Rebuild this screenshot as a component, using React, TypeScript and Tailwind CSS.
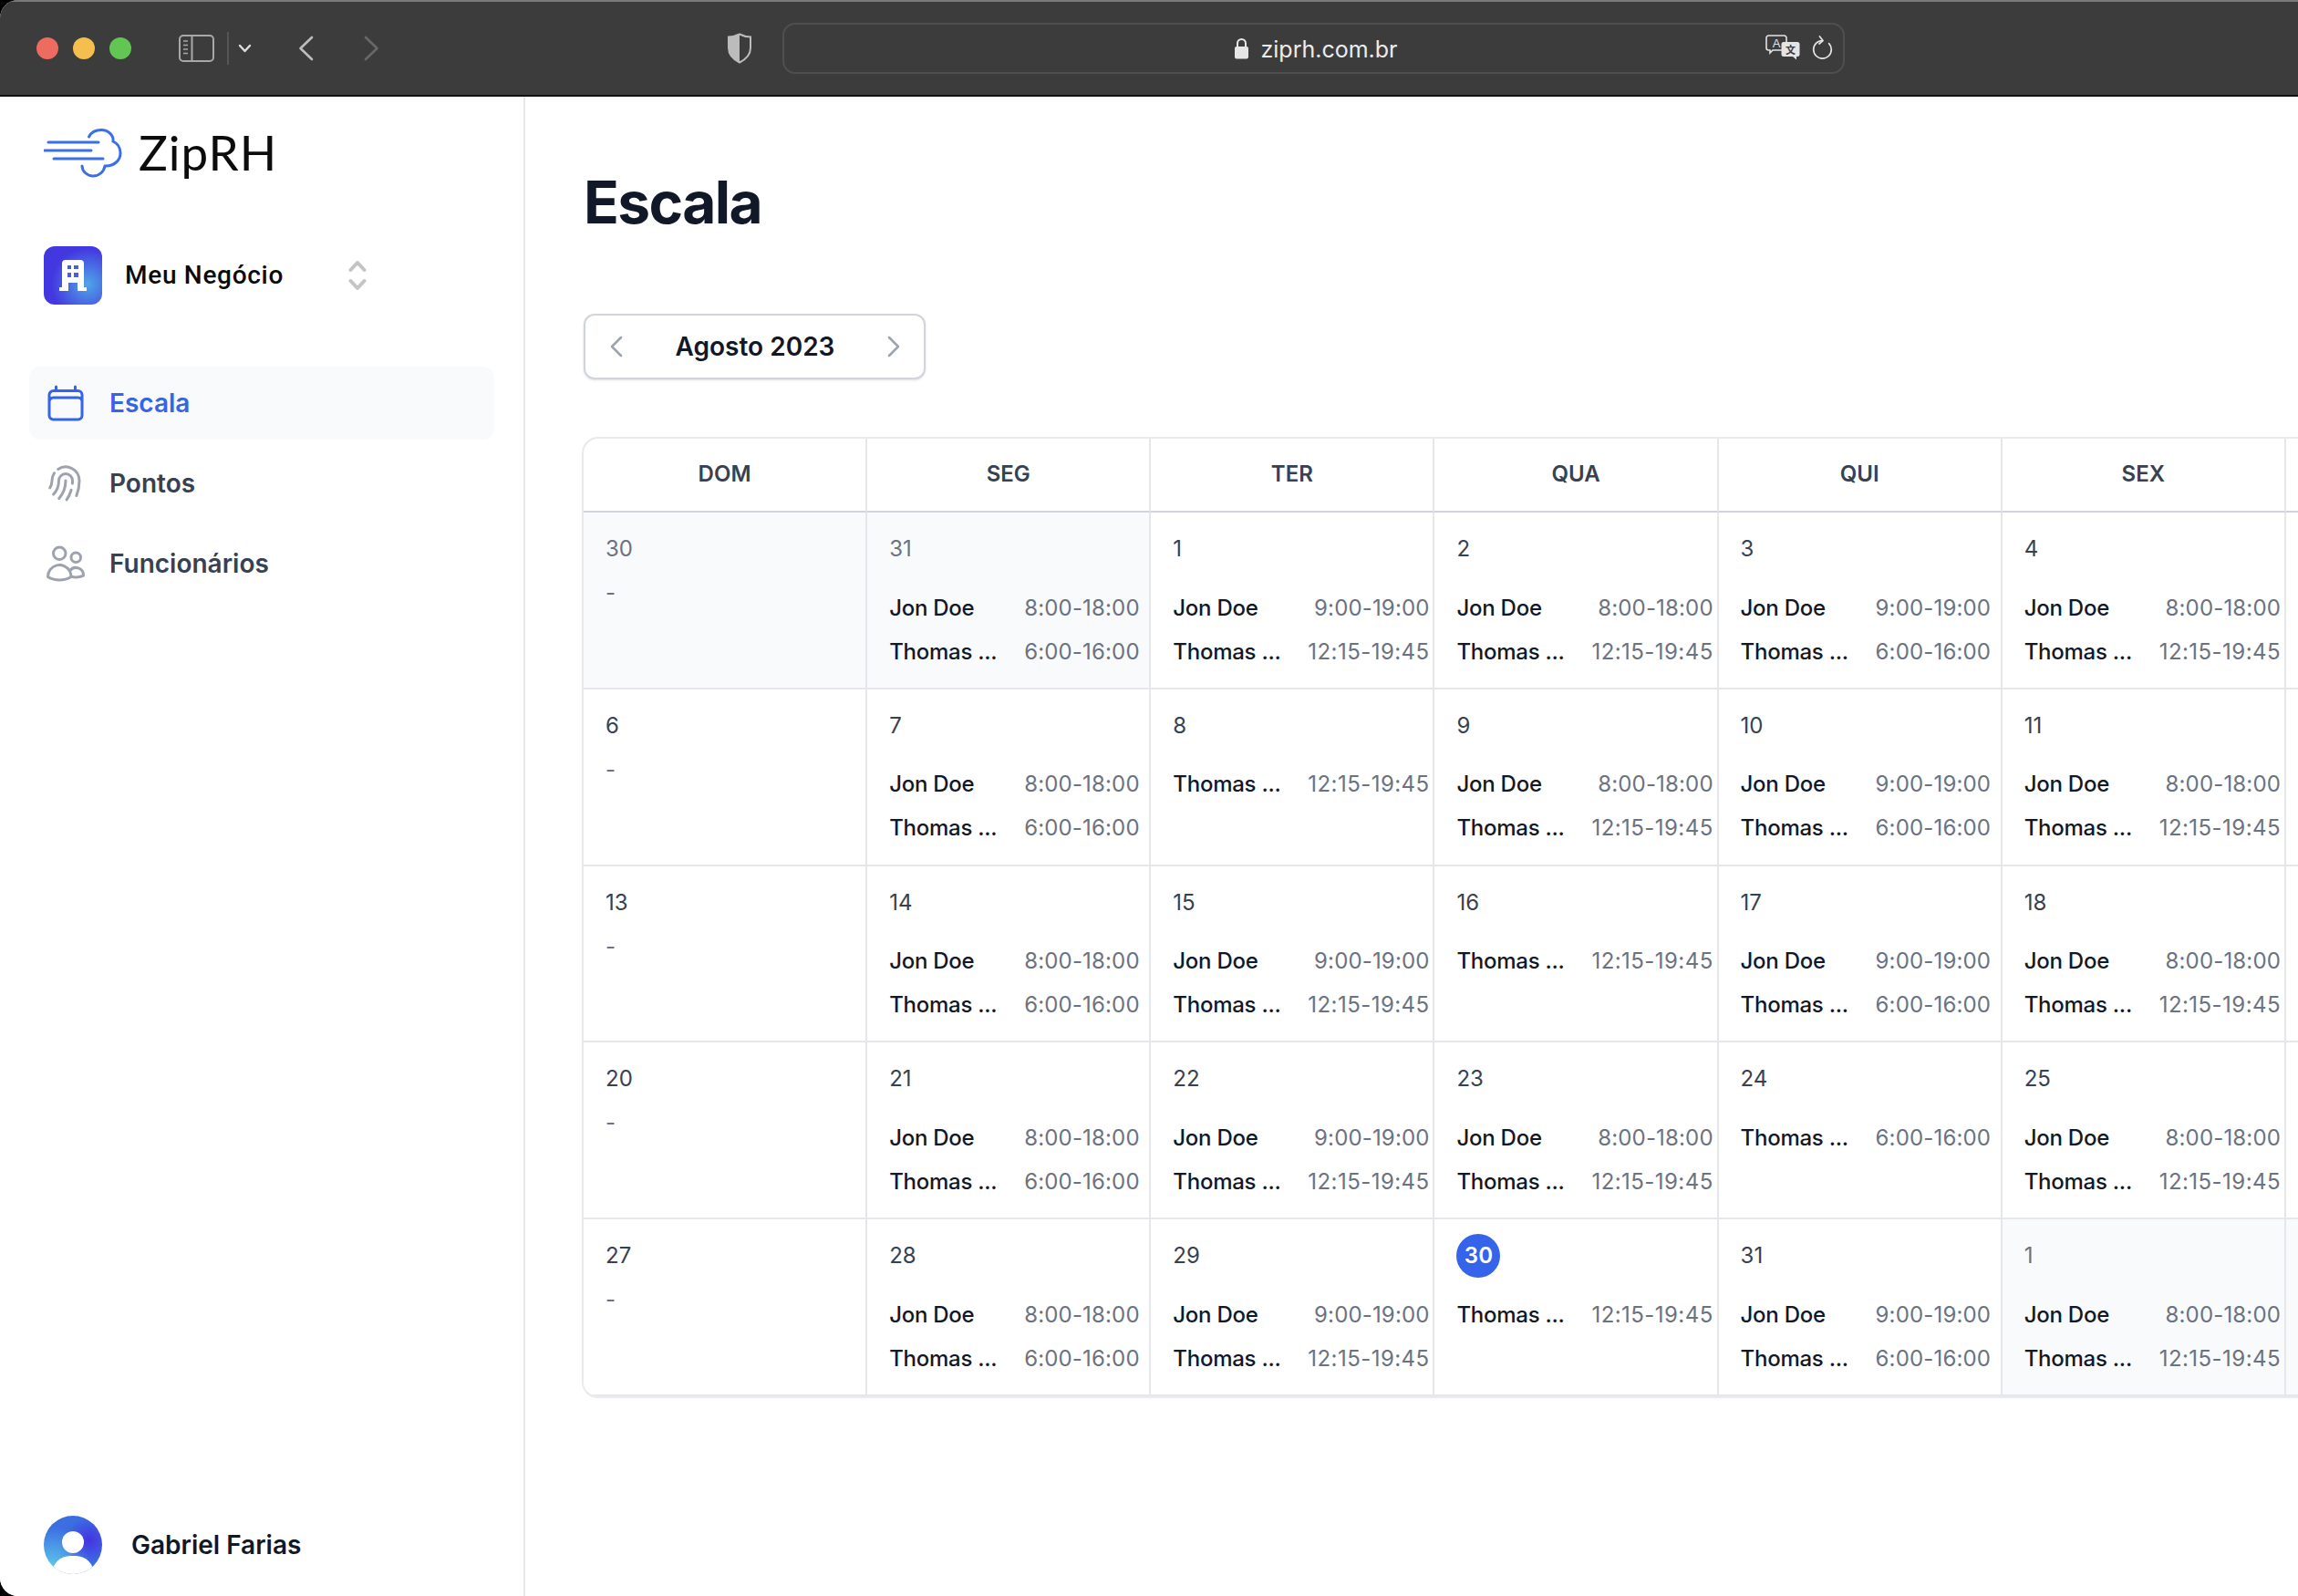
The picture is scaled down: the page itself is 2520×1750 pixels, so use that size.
import React from "react";

type Shift = { name: string; time: string };
type Day = { label: string; outside?: boolean; today?: boolean; shifts?: Shift[]; blank?: boolean };

const J8 = { name: "Jon Doe", time: "8:00-18:00" };
const J9 = { name: "Jon Doe", time: "9:00-19:00" };
const T6 = { name: "Thomas ...", time: "6:00-16:00" };
const T12 = { name: "Thomas ...", time: "12:15-19:45" };

const headers = ["DOM", "SEG", "TER", "QUA", "QUI", "SEX", ""];

const weeks: Day[][] = [
  [
    { label: "30", outside: true },
    { label: "31", outside: true, shifts: [J8, T6] },
    { label: "1", shifts: [J9, T12] },
    { label: "2", shifts: [J8, T12] },
    { label: "3", shifts: [J9, T6] },
    { label: "4", shifts: [J8, T12] },
    { label: "", blank: true },
  ],
  [
    { label: "6" },
    { label: "7", shifts: [J8, T6] },
    { label: "8", shifts: [T12] },
    { label: "9", shifts: [J8, T12] },
    { label: "10", shifts: [J9, T6] },
    { label: "11", shifts: [J8, T12] },
    { label: "", blank: true },
  ],
  [
    { label: "13" },
    { label: "14", shifts: [J8, T6] },
    { label: "15", shifts: [J9, T12] },
    { label: "16", shifts: [T12] },
    { label: "17", shifts: [J9, T6] },
    { label: "18", shifts: [J8, T12] },
    { label: "", blank: true },
  ],
  [
    { label: "20" },
    { label: "21", shifts: [J8, T6] },
    { label: "22", shifts: [J9, T12] },
    { label: "23", shifts: [J8, T12] },
    { label: "24", shifts: [T6] },
    { label: "25", shifts: [J8, T12] },
    { label: "", blank: true },
  ],
  [
    { label: "27" },
    { label: "28", shifts: [J8, T6] },
    { label: "29", shifts: [J9, T12] },
    { label: "30", today: true, shifts: [T12] },
    { label: "31", shifts: [J9, T6] },
    { label: "1", outside: true, shifts: [J8, T12] },
    { label: "", blank: true, outside: true },
  ],
];

function BrowserBar() {
  return (
    <div className="flex h-[106px] shrink-0 items-center border-t-2 border-b-2 border-t-[#7a7a7a] border-b-[#111111] bg-[#3c3c3c] pl-10">
      {/* Traffic lights */}
      <div className="flex gap-4">
        <div className="h-6 w-6 rounded-full bg-[#ee6b60]" />
        <div className="h-6 w-6 rounded-full bg-[#f5bf4f]" />
        <div className="h-6 w-6 rounded-full bg-[#62c554]" />
      </div>

      {/* Sidebar toggle */}
      <svg className="ml-[52px] h-[30px] w-[39px]" viewBox="0 0 39 30" fill="none" stroke="#a8a8a8" strokeWidth="2">
        <rect x="1" y="1" width="37" height="28" rx="4" />
        <path d="M14.5 1v28" />
        <path d="M5 7h5M5 11.5h5M5 16h5M5 20.5h5" strokeWidth="1.6" />
      </svg>
      <div className="ml-[14px] h-9 w-[2px] bg-[#555555]" />
      <svg className="ml-[10px] h-[10px] w-[15px]" viewBox="0 0 15 10" fill="none" stroke="#dddddd" strokeWidth="2.4" strokeLinecap="round" strokeLinejoin="round">
        <path d="M2 2l5.5 6L13 2" />
      </svg>

      {/* Back / forward */}
      <svg className="ml-[51px] h-[28px] w-[17px]" viewBox="0 0 17 28" fill="none" stroke="#bdbdbd" strokeWidth="2.6" strokeLinecap="round" strokeLinejoin="round">
        <path d="M15 2L2.5 14 15 26" />
      </svg>
      <svg className="ml-[55px] h-[28px] w-[17px]" viewBox="0 0 17 28" fill="none" stroke="#686868" strokeWidth="2.6" strokeLinecap="round" strokeLinejoin="round">
        <path d="M2 2l12.5 12L2 26" />
      </svg>

      {/* Shield */}
      <svg className="ml-[381px] h-[34px] w-[28px]" viewBox="0 0 28 34" fill="none">
        <path d="M14 1.5C10 3.5 6 4.5 2 4.5v12c0 7 5 12.500 12 16 7-3.500 12-9 12-16v-12c-4 0-8-1-12-3z" stroke="#bcbcbc" strokeWidth="2" />
        <path d="M14 1.500C10 3.500 6 4.500 2 4.500v12c0 7 5 12.500 12 16z" fill="#bcbcbc" />
      </svg>

      {/* Address bar */}
      <div className="relative ml-[33px] flex h-[56px] w-[1165px] items-center justify-center rounded-[14px] border-2 border-[#4f4f4f]">
        <div className="ml-[5px] mr-[12px] flex items-center">
          <svg className="h-[24px] w-[17px]" viewBox="0 0 17 24" fill="none">
            <path d="M4 11V6.500a4.500 4.500 0 019 0V11" stroke="#e6e6e6" strokeWidth="2" />
            <rect x="1" y="10" width="15" height="13.500" rx="2" fill="#e6e6e6" />
          </svg>
        </div>
        <span className="pt-[2px] font-['Inter',sans-serif] text-[25px] leading-none text-[#ececec]">ziprh.com.br</span>

        {/* Translate + reload */}
        <div className="absolute right-[11px] top-[11px] flex items-center gap-[13px]">
          <svg className="h-[28px] w-[38px]" viewBox="0 0 38 28" fill="none">
            <path d="M3.500 1h17a2.500 2.500 0 012.500 2.500v11a2.500 2.500 0 01-2.500 2.500H8l-3 3v-3H3.500A2.500 2.500 0 011 14.500v-11A2.500 2.500 0 013.500 1z" stroke="#e4e4e4" strokeWidth="1.6" />
            <text x="12" y="14" textAnchor="middle" fontSize="13" fontFamily="'Liberation Sans',sans-serif" fill="#e4e4e4">A</text>
            <path d="M20 8h15a2.500 2.500 0 012.500 2.500v11a2.500 2.500 0 01-2.500 2.500h-1v3.500L30 24H20a2.500 2.500 0 01-2.500-2.500v-11A2.500 2.500 0 0120 8z" fill="#e4e4e4" />
            <text x="27.500" y="21" textAnchor="middle" fontSize="11" fontFamily="'Noto Sans CJK SC',sans-serif" fontWeight="700" fill="#3c3c3c">文</text>
          </svg>
          <svg className="h-[26px] w-[23px]" viewBox="0 0 23 26" fill="none" stroke="#e4e4e4" strokeWidth="1.700" strokeLinecap="round" strokeLinejoin="round">
            <path d="M11.500 5.500A9.800 9.800 0 1021.300 15.300c0-2.600-1-5-2.700-6.700" />
            <path d="M8.500 1l3.500 4.500L8 9" />
          </svg>
        </div>
      </div>
    </div>
  );
}

function Sidebar() {
  return (
    <aside className="flex h-full w-[576px] shrink-0 flex-col border-r-2 border-[#e5e7eb] bg-white">
      {/* Logo */}
      <div className="flex items-center pl-12 pt-[34px]">
        <svg className="h-[54px] w-[86px]" viewBox="0 0 86 54" fill="none" stroke="#3b6fe8" strokeWidth="3" strokeLinecap="round">
          <path d="M5 15h55M1 24h51M11 33h54" />
          <path d="M49.500 9C52 4 57 1.500 63 1.500c8 0 14 6 13 12.500 5.500 2.500 8 7.500 8 13 0 8-7 14-16 14" />
          <path d="M42 41c0 6 6 11 12 11 7 0 12-5 13-11" />
        </svg>
        <span className="ml-[18px] pb-[3px] font-['Lato',sans-serif] text-[53px] leading-none tracking-[1px] text-[#0c0c0c]">ZipRH</span>
      </div>

      {/* Org switcher */}
      <div className="mt-[74px] flex items-center pl-12">
        <div className="flex h-16 w-16 items-center justify-center rounded-xl bg-[radial-gradient(circle_at_75%_65%,#4fa6e7_0%,#4338e0_62%)]">
          <svg className="h-16 w-16" viewBox="0 0 64 64">
            <path d="M20 19a4 4 0 014-4h16a4 4 0 014 4v26h3v4H37v-9H27v9H17v-4h3z" fill="#ffffff" />
            <path d="M26 21h4v4h-4zM33 21h5v4h-5zM26 29h4v5h-4zM33 29h5v5h-5z" fill="#4a5be4" />
          </svg>
        </div>
        <span className="ml-[25px] w-[245px] font-['Roboto',sans-serif] text-[28px] font-medium leading-none tracking-[0.7px] text-[#0b0b0b]">Meu Negócio</span>
        <svg className="h-[34px] w-[20px]" viewBox="0 0 20 34" fill="none" stroke="#c4c4c4" strokeWidth="4" strokeLinecap="round" strokeLinejoin="round">
          <path d="M2.500 11L10 3l7.500 8M2.500 23l7.500 8 7.500-8" />
        </svg>
      </div>

      {/* Nav */}
      <nav className="mt-[68px] flex flex-col gap-2 px-8">
        <NavItem label="Escala" active>
          <path d="M6.750 3v2.250M17.250 3v2.250M3 18.750V7.500a2.250 2.250 0 012.250-2.250h13.500A2.250 2.250 0 0121 7.500v11.250m-18 0A2.250 2.250 0 005.250 21h13.500A2.250 2.250 0 0021 18.750m-18 0v-7.500A2.250 2.250 0 015.250 9h13.500A2.250 2.250 0 0121 11.250v7.500" />
        </NavItem>
        <NavItem label="Pontos">
          <path d="M7.864 4.243A7.500 7.500 0 0119.500 10.500c0 2.920-.556 5.709-1.568 8.268M5.742 6.364A7.465 7.465 0 004.500 10.500a7.464 7.464 0 01-1.150 3.993m1.989 3.559A11.209 11.209 0 008.250 10.500a3.750 3.750 0 117.500 0c0 .527-.021 1.049-.064 1.565M12 10.500a14.940 14.940 0 01-3.600 9.750m6.633-4.596a18.666 18.666 0 01-2.485 5.330" />
        </NavItem>
        <NavItem label="Funcionários">
          <path d="M15 19.128a9.380 9.380 0 002.625.372 9.337 9.337 0 004.121-.952 4.125 4.125 0 00-7.533-2.493M15 19.128v-.003c0-1.113-.285-2.160-.786-3.070M15 19.128v.106A12.318 12.318 0 018.624 21c-2.331 0-4.512-.645-6.374-1.766l-.001-.109a6.375 6.375 0 0111.964-3.070M12 6.375a3.375 3.375 0 11-6.750 0 3.375 3.375 0 016.750 0zm8.250 2.250a2.625 2.625 0 11-5.250 0 2.625 2.625 0 015.250 0z" />
        </NavItem>
      </nav>

      {/* User */}
      <div className="mt-auto flex items-center pb-6 pl-12">
        <div className="relative h-16 w-16 overflow-hidden rounded-full bg-[#3c6ee2] bg-[radial-gradient(circle_at_78%_42%,#4433e0_0%,transparent_42%),radial-gradient(circle_at_15%_85%,#5cc4ea_0%,transparent_55%)]">
          <div className="absolute left-5 top-[17px] h-6 w-6 rounded-full bg-white" />
          <div className="absolute left-[9px] top-[44px] h-10 w-[46px] rounded-full bg-white" />
        </div>
        <span className="ml-8 font-['Inter',sans-serif] text-[28px] font-semibold leading-none text-[#111827]">Gabriel Farias</span>
      </div>
    </aside>
  );
}

function NavItem({ label, active, children }: { label: string; active?: boolean; children: React.ReactNode }) {
  return (
    <div className={active ? "flex h-20 items-center gap-6 rounded-xl bg-[#f9fafb] p-4 text-[#3563e9]" : "flex h-20 items-center gap-6 rounded-xl p-4 text-[#374151]"}>
      <svg
        className={active ? "h-12 w-12 shrink-0 text-[#3563e9]" : "h-12 w-12 shrink-0 text-[#9ca3af]"}
        viewBox="0 0 24 24"
        fill="none"
        stroke="currentColor"
        strokeWidth="1.5"
        strokeLinecap="round"
        strokeLinejoin="round"
      >
        {children}
      </svg>
      <span className="text-[28px] font-semibold leading-none">{label}</span>
    </div>
  );
}

function DayCell({ day }: { day: Day }) {
  const bg = day.outside ? "bg-[#f9fafb]" : "bg-white";
  return (
    <div className={`border-r-2 border-b-2 border-[#e5e7eb] pl-6 pt-4 ${bg}`}>
      {day.blank ? null : (
        <>
          {day.today ? (
            <div className="flex h-12 w-12 items-center justify-center rounded-full bg-[#3563e9] text-[24px] font-semibold text-white">
              {day.label}
            </div>
          ) : (
            <div className={day.outside ? "flex h-12 items-center text-[24px] text-[#6b7280]" : "flex h-12 items-center text-[24px] text-[#374151]"}>
              {day.label}
            </div>
          )}
          {day.shifts ? (
            <div className="mt-[16.5px] grid w-fit grid-cols-[148px_max-content] text-[24px] leading-[48px]">
              {day.shifts.map((s, i) => (
                <React.Fragment key={i}>
                  <span className="font-medium tracking-[-0.25px] text-[#111827]">{s.name}</span>
                  <span className={s === T12 ? "text-right tracking-[0.45px] text-[#6b7280]" : "text-right tracking-[0.16px] text-[#6b7280]"}>{s.time}</span>
                </React.Fragment>
              ))}
            </div>
          ) : (
            <div className="mt-2 text-[24px] leading-8 text-[#6b7280]">-</div>
          )}
        </>
      )}
    </div>
  );
}

function Calendar() {
  return (
    <div className="mt-[65px] w-[2178px] shrink-0 overflow-hidden rounded-2xl bg-white shadow-sm ring-2 ring-[#e9eaee]">
      <div className="grid grid-cols-7">
        {headers.map((h, i) => (
          <div key={i} className="flex h-[81px] items-center justify-center border-r-2 border-b-2 border-r-[#e5e7eb] border-b-[#d1d5db] pb-[2px] text-[24px] font-semibold text-[#374151]">
            {h}
          </div>
        ))}
      </div>
      <div className="grid grid-cols-7 auto-rows-[193.8px]">
        {weeks.flat().map((d, i) => (
          <DayCell key={i} day={d} />
        ))}
      </div>
    </div>
  );
}

export default function App() {
  return (
    <div className="h-[1750px] w-[2520px] overflow-hidden bg-black">
      <div className="flex h-full w-full flex-col overflow-hidden rounded-l-[20px] bg-white font-['Inter',sans-serif]">
        <BrowserBar />
        <div className="flex min-h-0 flex-1">
          <Sidebar />

          <main className="min-w-0 flex-1 overflow-hidden pl-16 pt-20">
            <h1 className="text-[64px] font-bold leading-[72px] tracking-[-1.6px] text-[#111827]">Escala</h1>

            {/* Month picker */}
            <div className="mt-[86px] flex h-[72px] w-[375px] items-center justify-between rounded-xl border-2 border-[#d1d5db] bg-white pl-[27px] pr-[26px] shadow-sm">
              <svg className="h-[24px] w-[14px]" viewBox="0 0 14 24" fill="none" stroke="#9ca3af" strokeWidth="2.500" strokeLinecap="round" strokeLinejoin="round">
                <path d="M12 2L2 12l10 10" />
              </svg>
              <span className="text-[28px] font-semibold leading-none text-[#111827]">Agosto 2023</span>
              <svg className="h-[24px] w-[14px]" viewBox="0 0 14 24" fill="none" stroke="#9ca3af" strokeWidth="2.500" strokeLinecap="round" strokeLinejoin="round">
                <path d="M2 2l10 10L2 22" />
              </svg>
            </div>

            <Calendar />
          </main>
        </div>
      </div>
    </div>
  );
}
